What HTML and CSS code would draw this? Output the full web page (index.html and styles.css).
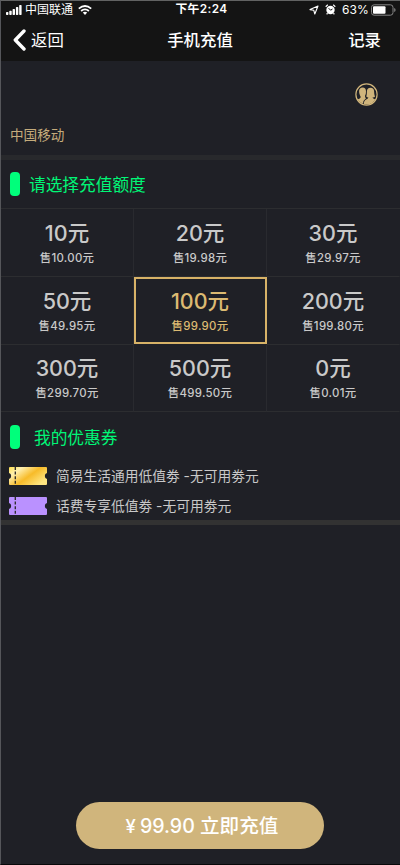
FILE: index.html
```html
<!DOCTYPE html>
<html lang="zh-CN">
<head>
<meta charset="utf-8">
<title>手机充值</title>
<link rel="stylesheet" href="styles.css">
</head>
<body>
<div class="screen">
  <header class="top">
    <div class="status">
      <div class="status-left">
        <svg width="16" height="10" viewBox="0 0 16 10" fill="#fff"><rect x="0" y="7" width="2.4" height="3" rx=".7"/><rect x="3.3" y="5.7" width="2.4" height="4.3" rx=".7"/><rect x="6.6" y="4" width="2.4" height="6" rx=".7"/><rect x="9.9" y="2" width="2.4" height="8" rx=".7"/><rect x="13.2" y="0" width="2.4" height="10" rx=".7"/></svg>
        <span class="carrier">中国联通</span>
        <svg class="wifi" width="14" height="10" viewBox="0 0 14 10" fill="none" stroke="#fff" stroke-width="1.8"><path d="M.8 3.6Q7-1.7 13.2 3.6M3.1 6Q7 2.7 10.9 6"/><path d="M4.8 7.6Q7 5.8 9.2 7.6L7 9.9Z" fill="#fff" stroke="none"/></svg>
      </div>
      <div class="time">下午2:24</div>
      <div class="status-right">
        <svg width="10" height="10" viewBox="0 0 10 10" fill="none" stroke="#fff" stroke-width="1.1" stroke-linejoin="round"><path d="M9 1L5.8 9L4.8 5.3L1 4.6Z"/></svg>
        <svg class="alarm" width="11" height="11" viewBox="0 0 11 11"><circle cx="5.5" cy="6" r="4.2" fill="#fff"/><path d="M.7 2.7L2.8.8M10.3 2.7L8.2.8M2.5 9.2L1.7 10.4M8.5 9.2L9.3 10.4" stroke="#fff" stroke-width="1.2"/><path d="M3.6 4.2L5.6 6.2L7.5 5" stroke="#141414" fill="none"/></svg>
        <span class="percent">63%</span>
        <svg width="25" height="12" viewBox="0 0 25 12"><rect x=".5" y=".8" width="21.5" height="10.4" rx="2.6" fill="none" stroke="#858585"/><rect x="2" y="2.3" width="12.5" height="7.4" rx="1" fill="#fff"/><path d="M23.2 4V8Q24.6 7.5 24.6 6T23.2 4" fill="#858585"/></svg>
      </div>
    </div>
    <nav class="nav">
      <a class="back"><svg width="13" height="22" viewBox="0 0 13 22" fill="none" stroke="#fff" stroke-width="3.4" stroke-linecap="round" stroke-linejoin="round"><path d="M11 2L2.3 11L11 20"/></svg><span>返回</span></a>
      <h1 class="title">手机充值</h1>
      <a class="record">记录</a>
    </nav>
  </header>

  <section class="phone">
    <svg class="contacts" width="23" height="23" viewBox="0 0 23 23"><circle cx="11.5" cy="11.5" r="10.6" fill="#1f2026" stroke="#d0b57c" stroke-width="1.2"/><g fill="#d0b57c"><path d="M7.6 4.6Q11 4.8 11 8.5Q11 11.6 10 12.8Q9.8 14.4 11 15.2Q8.3 17 8 20.8Q4.6 19.6 2.6 16.4Q5.4 15.6 5.7 14.2Q5.6 13.2 5 12.4Q4 10.8 4.1 8Q4.3 4.7 7.6 4.6Z"/><path d="M15.5 4.8Q19 4.8 19.1 8.5Q19.1 11.8 20 13.8Q18.8 14.6 17.4 14.4Q17.8 15.6 20.2 16.4Q16.8 21.6 11.5 21.6Q9.8 21.4 8.8 21Q8.8 17.4 11.6 16.2Q13.2 15.5 13.4 14.4Q12 14.4 11.3 13.4Q12 11.5 11.9 8.5Q12 4.9 15.5 4.8Z"/></g></svg>
    <div class="operator">中国移动</div>
  </section>

  <section class="recharge">
    <h2 class="heading"><i class="marker"></i>请选择充值额度</h2>
    <div class="grid">
      <div class="cell"><b>10元</b><span>售10.00元</span></div>
      <div class="cell"><b>20元</b><span>售19.98元</span></div>
      <div class="cell"><b>30元</b><span>售29.97元</span></div>
      <div class="cell"><b>50元</b><span>售49.95元</span></div>
      <div class="cell selected"><b>100元</b><span>售99.90元</span></div>
      <div class="cell"><b>200元</b><span>售199.80元</span></div>
      <div class="cell"><b>300元</b><span>售299.70元</span></div>
      <div class="cell"><b>500元</b><span>售499.50元</span></div>
      <div class="cell"><b>0元</b><span>售0.01元</span></div>
    </div>
  </section>

  <section class="coupons">
    <h2 class="heading coupon-heading"><i class="marker"></i>我的优惠券</h2>
    <div class="coupon">
      <svg width="38" height="18" viewBox="0 0 38 18"><defs><linearGradient id="gold" x1="0" y1="0" x2="1" y2=".65"><stop offset="0" stop-color="#ffe04e"/><stop offset=".25" stop-color="#fff0b0"/><stop offset=".6" stop-color="#f7bb29"/><stop offset="1" stop-color="#ffe681"/></linearGradient></defs><path d="M1 0H37Q38 0 38 1V6Q35.8 6.5 35.8 9T38 12V17Q38 18 37 18H1Q0 18 0 17V12Q2.2 11.5 2.2 9T0 6V1Q0 0 1 0Z" fill="url(#gold)"/><path d="M6.3 0V18" stroke="#292827" stroke-width="1.3" stroke-dasharray="3 1.6"/></svg>
      <span>简易生活通用低值劵 -无可用劵元</span>
    </div>
    <div class="coupon">
      <svg width="38" height="18" viewBox="0 0 38 18"><path d="M1 0H37Q38 0 38 1V6Q35.8 6.5 35.8 9T38 12V17Q38 18 37 18H1Q0 18 0 17V12Q2.2 11.5 2.2 9T0 6V1Q0 0 1 0Z" fill="#ba91ff"/><path d="M6.3 0V18" stroke="#292827" stroke-width="1.3" stroke-dasharray="3 1.6"/></svg>
      <span>话费专享低值劵 -无可用劵元</span>
    </div>
  </section>

  <footer class="footer"><button class="pay"><span class="yen">¥</span>99.90 立即充值</button></footer>
</div>
</body>
</html>
```

FILE: styles.css
```css
* { box-sizing: border-box; }
body {
  margin: 0;
  background: #1f2026;
  font-family: Inter, "Noto Sans CJK SC", sans-serif;
  color: #c9c9c9;
}
.screen {
  width: 400px;
  height: 865px;
  display: flex;
  flex-direction: column;
  border-top: 1px solid #626363;
  border-left: 1px solid #55565a;
  border-bottom: 1px solid #08080a;
}
.top { height: 60px; background: #141414; color: #fff; flex: none; }
.status {
  height: 17px;
  display: grid;
  grid-template-columns: 1fr auto 1fr;
  align-items: center;
  padding: 0 4px 0 5px;
  font-size: 12px;
  line-height: 17px;
}
.status-left, .status-right { display: flex; align-items: center; }
.status-right { justify-content: flex-end; }
.carrier { margin-left: 3px; font-size: 12px; }
.wifi { margin-left: 5px; }
.time { font-weight: 600; font-size: 11.8px; letter-spacing: .4px; padding-left: 1px; }
.alarm { margin-left: 6px; }
.percent { margin: 0 2px 0 6px; letter-spacing: .1px; }
.nav {
  height: 43px;
  display: grid;
  grid-template-columns: 1fr auto 1fr;
  align-items: center;
  padding: 0 19px 0 12px;
  font-size: 16.4px;
  line-height: 24px;
  font-weight: 500;
}
.back { display: flex; align-items: center; gap: 5px; font-weight: 400; }
.title { margin: 0; font-size: 16.4px; font-weight: 500; padding-left: 6px; }
.record { text-align: right; }
.phone {
  height: 99px;
  flex: none;
  display: flex;
  flex-direction: column;
  justify-content: space-between;
  padding: 22px 22px 10px 9px;
  border-bottom: 5px solid #28292c;
}
.contacts { align-self: flex-end; }
.operator { color: #c5ac7c; font-size: 13.6px; line-height: 20px; }
.heading {
  margin: 0;
  height: 48px;
  display: flex;
  align-items: center;
  gap: 9px;
  padding-left: 9px;
  color: #00f777;
  font-size: 16.7px;
  font-weight: 400;
}
.marker { width: 10px; height: 24px; border-radius: 4px; background: #00ff7b; }
.grid {
  display: grid;
  grid-template-columns: 133px 133px 133px;
  grid-template-rows: 68px 68px 67px;
  border-top: 1px solid #2c2d30;
}
.cell {
  display: flex;
  flex-direction: column;
  align-items: center;
  padding-top: 11px;
  border-right: 1px solid #292a2f;
  border-bottom: 1px solid #2c2d30;
}
.cell:nth-child(3n) { border-right-color: transparent; }
.cell:nth-child(n+7) { padding-top: 10px; }
.cell b { font-size: 21.5px; line-height: 26px; font-weight: 500; }
.cell span { font-size: 11.4px; line-height: 16px; margin-top: 4px; font-weight: 500; letter-spacing: .3px; }
.selected { border: 2px solid #d7b267; padding-top: 9px; padding-right: 1px; color: #dcba72; margin-bottom: 1px; }
.coupons { height: 113px; border-bottom: 5px solid #323232; }
.coupon-heading { gap: 14px; height: 49px; }
.coupon {
  display: flex;
  align-items: center;
  gap: 9px;
  height: 30px;
  padding-left: 8px;
  font-size: 13.75px;
  line-height: 20px;
}
.footer { margin-top: auto; height: 62px; display: flex; justify-content: center; align-items: flex-start; padding-right: 1px; }
.pay {
  width: 248px;
  height: 47px;
  padding: 0 0 0 4px;
  border: 0;
  border-radius: 24px;
  background: #d0b57c;
  color: #fff;
  font: 500 19.6px/24px Inter, "Noto Sans CJK SC", sans-serif;
}
.yen { margin-right: 4px; font-size: 18.5px; }
```
